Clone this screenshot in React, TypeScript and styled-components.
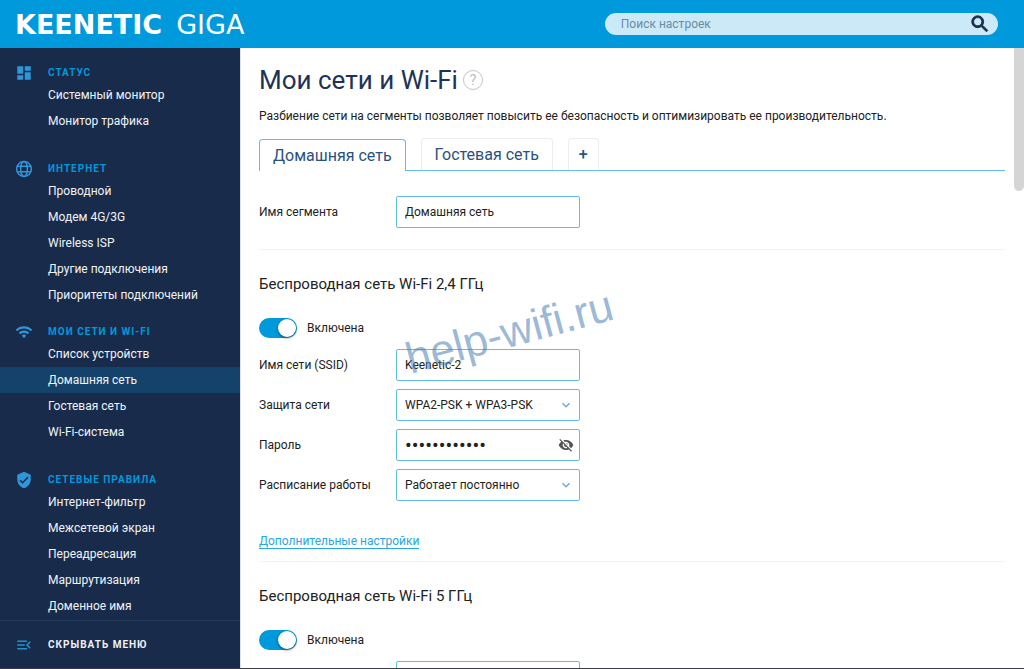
import React, { useState } from 'react';
import styled, { createGlobalStyle, css } from 'styled-components';
import {
  MdDashboard,
  MdKeyboardArrowDown,
  MdMenuOpen,
  MdSearch,
  MdVerifiedUser,
  MdVisibilityOff,
  MdWifi,
} from 'react-icons/md';

const colors = {
  brand: '#0099dc',
  navy: '#182b4b',
  active: '#14426a',
  border: '#5fbde6',
  heading: '#1e3257',
  tab: '#2a527c',
  text: '#222222',
};

const GlobalStyle = createGlobalStyle`
  *, *::before, *::after { box-sizing: border-box; }
  body {
    margin: 0;
    background: #ffffff;
    color: ${colors.text};
    font-family: Roboto, "Noto Sans", sans-serif;
    font-size: 12px;
    line-height: 16px;
  }
  button, input, select { font: inherit; color: inherit; }
`;

const Page = styled.div`
  display: flex;
  flex-direction: column;
  height: 100vh;
  border-bottom: 1px solid #3c3d42;
`;

const Header = styled.header`
  display: flex;
  flex: none;
  align-items: center;
  justify-content: space-between;
  height: 48px;
  padding: 0 26px 0 15px;
  background: ${colors.brand};
`;

const Logo = styled.a`
  display: flex;
  gap: 14px;
  padding-top: 2px;
  color: #ffffff;
  font-family: "DejaVu Sans", sans-serif;
  font-size: 27px;
  font-weight: 700;
  line-height: 32px;
  text-decoration: none;
`;

const LogoModel = styled.span`
  font-weight: 400;
`;

const Search = styled.form`
  display: flex;
  align-items: center;
  width: 40%;
  height: 22px;
  padding: 0 7px 0 16px;
  border-radius: 11px;
  background: #cce9f8;
`;

const SearchInput = styled.input`
  flex: 1;
  min-width: 0;
  padding: 0;
  border: 0;
  outline: 0;
  background: transparent;
  &::placeholder { color: #6b8ba3; opacity: 1; }
`;

const IconButton = styled.button`
  display: flex;
  align-items: center;
  justify-content: center;
  flex: none;
  padding: 0;
  border: 0;
  background: transparent;
  cursor: pointer;
`;

const SearchButton = styled(IconButton)`
  color: ${colors.navy};
  font-size: 22px;

  path:last-child { stroke: currentColor; stroke-width: 1; }
`;

const Body = styled.div`
  display: flex;
  flex: 1;
  min-height: 0;
`;

const Sidebar = styled.aside`
  display: flex;
  flex: none;
  flex-direction: column;
  width: 240px;
  background: ${colors.navy};
`;

const Nav = styled.nav`
  flex: 1;
  min-height: 0;
  padding-top: 15px;
  overflow: hidden;
`;

const NavSection = styled.section<{ $tight?: boolean }>`
  padding-bottom: ${({ $tight }) => ($tight ? '14px' : '25px')};
`;

const NavTitle = styled.h2`
  display: flex;
  align-items: center;
  gap: 15px;
  height: 19px;
  margin: 0;
  padding: 0 15px;
  color: ${colors.brand};
  font-size: 10px;
  font-weight: 700;
  letter-spacing: 1px;
  text-transform: uppercase;

  svg {
    flex: none;
    width: 18px;
    height: 18px;
    color: #2f97d8;
  }
`;

const NavList = styled.ul`
  margin: 0;
  padding: 0;
  list-style: none;
`;

const NavLink = styled.a<{ $active?: boolean }>`
  display: block;
  padding: 0 16px 0 48px;
  background: ${({ $active }) => ($active ? colors.active : 'transparent')};
  color: #f0f3f7;
  line-height: 26px;
  text-decoration: none;
`;

const CollapseButton = styled.button`
  display: flex;
  flex: none;
  align-items: center;
  gap: 15px;
  height: 48px;
  padding: 0 15px;
  border: 0;
  border-top: 1px solid #22385a;
  background: transparent;
  color: #f0f3f7;
  font-size: 10px;
  font-weight: 700;
  letter-spacing: 1px;
  text-transform: uppercase;
  cursor: pointer;

  svg { width: 18px; height: 18px; color: #2191d0; }
`;

const Main = styled.main`
  flex: 1;
  min-width: 0;
  padding: 16px 9px 0 18px;
  overflow-y: auto;
  scrollbar-width: none;
  border-left: 1px solid #e1e2ec;
`;

const ScrollTrack = styled.div`
  flex: none;
  width: 10px;
`;

const ScrollThumb = styled.div`
  height: 23%;
  border-radius: 0 0 5px 5px;
  background: #d5d5d5;
`;

const TitleRow = styled.div`
  display: flex;
  align-items: center;
  gap: 5px;
  height: 32px;
`;

const Title = styled.h1`
  margin: 0;
  color: ${colors.heading};
  font-size: 26px;
  font-weight: 400;
  line-height: 32px;
`;

const HelpButton = styled(IconButton)`
  width: 20px;
  height: 20px;
  border: 1px solid #c4c4c4;
  border-radius: 50%;
  color: #bdbdbd;
  font-size: 14px;
`;

const Intro = styled.p`
  margin: 12px 0 14px;
`;

const Tabs = styled.div`
  display: flex;
  align-items: flex-end;
  gap: 15px;
  border-bottom: 1px solid ${colors.border};
`;

const Tab = styled.button<{ $active?: boolean }>`
  height: 32px;
  padding: 0 13px;
  border: 1px solid #ebedf2;
  border-bottom: 0;
  border-radius: 4px 4px 0 0;
  background: #ffffff;
  color: ${colors.tab};
  font-size: 16px;
  cursor: pointer;
  ${({ $active }) =>
    $active &&
    css`
      margin-bottom: -1px;
      border-color: ${colors.border};
    `}
`;

const AddTab = styled(Tab)`
  padding: 0 10px;
  font-weight: 500;
`;

const Panel = styled.section`
  padding: 25px 0 21px;
  border-bottom: 1px solid #f2f3f5;
`;

const PanelTitle = styled.h2`
  margin: 0 0 24px;
  color: ${colors.text};
  font-size: 15px;
  font-weight: 400;
  line-height: 20px;
`;

const WifiPanel = styled(Panel)`
  padding-top: 24px;
  padding-bottom: 12px;
`;

const Switch = styled.label`
  display: flex;
  align-items: center;
  gap: 10px;
  width: max-content;
  margin-bottom: 11px;
  cursor: pointer;
`;

const SwitchInput = styled.input`
  appearance: none;
  flex: none;
  display: flex;
  width: 38px;
  height: 20px;
  margin: 0;
  padding: 1px;
  border-radius: 10px;
  background: #c4ccd4;
  cursor: pointer;

  &::before {
    content: '';
    width: 18px;
    height: 18px;
    border-radius: 50%;
    background: #ffffff;
    box-shadow: 0 1px 3px rgba(0, 0, 0, 0.5);
  }
  &:checked { justify-content: flex-end; background: ${colors.brand}; }
`;

const Fields = styled.div`
  display: grid;
  gap: 8px;
`;

const Field = styled.div`
  display: grid;
  grid-template-columns: 137px 184px;
  align-items: center;
`;

const Control = styled.div`
  display: flex;
  align-items: center;
  height: 32px;
  padding: 0 5px 0 8px;
  border: 1px solid ${colors.border};
  border-radius: 2px;
`;

const Input = styled.input`
  flex: 1;
  min-width: 0;
  padding: 0;
  border: 0;
  outline: 0;
  background: transparent;

  &[type='password'] { font-size: 20px; }
`;

const Select = styled.select`
  appearance: none;
  flex: 1;
  min-width: 0;
  padding: 0;
  border: 0;
  outline: 0;
  background: transparent;
`;

const Arrow = styled(MdKeyboardArrowDown)`
  flex: none;
  color: #69a9d8;
  font-size: 16px;
  pointer-events: none;
`;

const EyeButton = styled(IconButton)`
  color: #555555;
  font-size: 16px;
`;

const MoreLink = styled.a`
  display: inline-block;
  margin-top: 33px;
  border-bottom: 1px solid #2aa7df;
  color: #2aa7df;
  line-height: 14px;
  text-decoration: none;
`;

const NetworkArea = styled.div`
  position: relative;
`;

const Watermark = styled.span`
  position: absolute;
  top: 57px;
  left: 144px;
  color: rgba(70, 125, 180, 0.55);
  font-family: "Liberation Sans", sans-serif;
  font-size: 44px;
  line-height: 50px;
  white-space: nowrap;
  transform: rotate(-15deg);
  pointer-events: none;
`;

const GlobeIcon = () => (
  <svg viewBox="0 0 18 18" fill="none" stroke="currentColor" strokeWidth="1.5" aria-hidden="true">
    <circle cx="9" cy="9" r="7.4" />
    <ellipse cx="9" cy="9" rx="3.4" ry="7.4" />
    <path d="M2.2 6.3h13.6M2.2 11.7h13.6" />
  </svg>
);

type Section = { title: string; icon: React.ReactNode; items: string[]; tight?: boolean };

const sections: Section[] = [
  { title: 'Статус', icon: <MdDashboard />, items: ['Системный монитор', 'Монитор трафика'] },
  {
    title: 'Интернет',
    icon: <GlobeIcon />,
    items: ['Проводной', 'Модем 4G/3G', 'Wireless ISP', 'Другие подключения', 'Приоритеты подключений'],
    tight: true,
  },
  {
    title: 'Мои сети и Wi-Fi',
    icon: <MdWifi />,
    items: ['Список устройств', 'Домашняя сеть', 'Гостевая сеть', 'Wi-Fi-система'],
  },
  {
    title: 'Сетевые правила',
    icon: <MdVerifiedUser />,
    items: ['Интернет-фильтр', 'Межсетевой экран', 'Переадресация', 'Маршрутизация', 'Доменное имя'],
  },
];

type WifiProps = { id: string; band: string; ssid: string };

function WifiSettings({ id, band, ssid }: WifiProps) {
  const [visible, setVisible] = useState(false);
  return (
    <WifiPanel>
      <PanelTitle>Беспроводная сеть Wi-Fi {band}</PanelTitle>
      <Switch>
        <SwitchInput type="checkbox" role="switch" defaultChecked />
        Включена
      </Switch>
      <Fields>
        <Field>
          <label htmlFor={`${id}-ssid`}>Имя сети (SSID)</label>
          <Control>
            <Input id={`${id}-ssid`} defaultValue={ssid} />
          </Control>
        </Field>
        <Field>
          <label htmlFor={`${id}-security`}>Защита сети</label>
          <Control>
            <Select id={`${id}-security`}>
              <option>WPA2-PSK + WPA3-PSK</option>
            </Select>
            <Arrow />
          </Control>
        </Field>
        <Field>
          <label htmlFor={`${id}-password`}>Пароль</label>
          <Control>
            <Input id={`${id}-password`} type={visible ? 'text' : 'password'} defaultValue="keenetic2024" />
            <EyeButton type="button" aria-label="Показать пароль" onClick={() => setVisible(!visible)}>
              <MdVisibilityOff />
            </EyeButton>
          </Control>
        </Field>
        <Field>
          <label htmlFor={`${id}-schedule`}>Расписание работы</label>
          <Control>
            <Select id={`${id}-schedule`}>
              <option>Работает постоянно</option>
            </Select>
            <Arrow />
          </Control>
        </Field>
      </Fields>
      <MoreLink href="#more">Дополнительные настройки</MoreLink>
    </WifiPanel>
  );
}

export default function App() {
  return (
    <Page>
      <GlobalStyle />
      <Header>
        <Logo href="#home">
          KEENETIC <LogoModel>GIGA</LogoModel>
        </Logo>
        <Search role="search" onSubmit={(event) => event.preventDefault()}>
          <SearchInput type="search" placeholder="Поиск настроек" aria-label="Поиск настроек" />
          <SearchButton type="submit" aria-label="Найти">
            <MdSearch />
          </SearchButton>
        </Search>
      </Header>
      <Body>
        <Sidebar>
          <Nav>
            {sections.map(({ title, icon, items, tight }) => (
              <NavSection key={title} $tight={tight}>
                <NavTitle>
                  {icon}
                  {title}
                </NavTitle>
                <NavList>
                  {items.map((item) => (
                    <li key={item}>
                      <NavLink href="#page" $active={item === 'Домашняя сеть'}>
                        {item}
                      </NavLink>
                    </li>
                  ))}
                </NavList>
              </NavSection>
            ))}
          </Nav>
          <CollapseButton type="button">
            <MdMenuOpen />
            Скрывать меню
          </CollapseButton>
        </Sidebar>
        <Main>
          <TitleRow>
            <Title>Мои сети и Wi-Fi</Title>
            <HelpButton type="button" aria-label="Справка">?</HelpButton>
          </TitleRow>
          <Intro>
            Разбиение сети на сегменты позволяет повысить ее безопасность и оптимизировать ее производительность.
          </Intro>
          <Tabs role="tablist">
            <Tab type="button" role="tab" aria-selected="true" $active>
              Домашняя сеть
            </Tab>
            <Tab type="button" role="tab" aria-selected="false">
              Гостевая сеть
            </Tab>
            <AddTab type="button" aria-label="Добавить сегмент">+</AddTab>
          </Tabs>
          <Panel>
            <Field>
              <label htmlFor="segment">Имя сегмента</label>
              <Control>
                <Input id="segment" defaultValue="Домашняя сеть" />
              </Control>
            </Field>
          </Panel>
          <NetworkArea>
            <WifiSettings id="wifi24" band="2,4 ГГц" ssid="Keenetic-2" />
            <WifiSettings id="wifi5" band="5 ГГц" ssid="Keenetic-5" />
            <Watermark>help-wifi.ru</Watermark>
          </NetworkArea>
        </Main>
        <ScrollTrack>
          <ScrollThumb />
        </ScrollTrack>
      </Body>
    </Page>
  );
}
